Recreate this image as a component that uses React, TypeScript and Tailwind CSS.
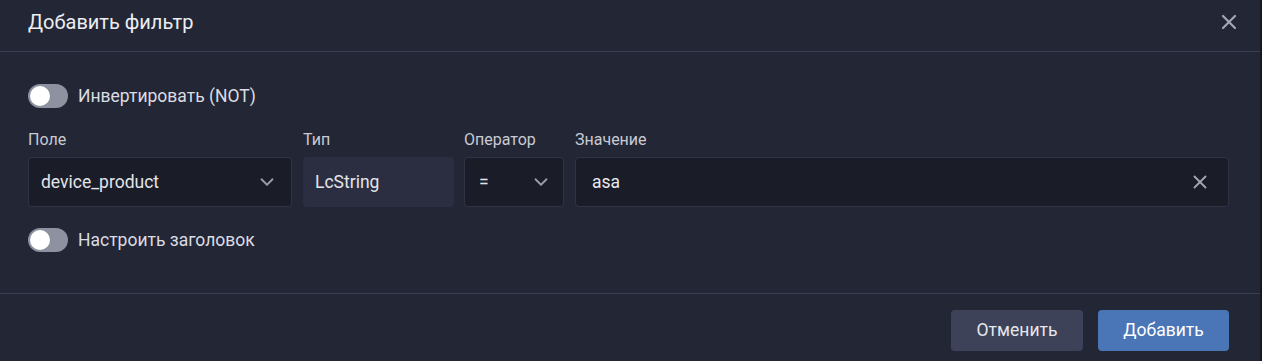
import { ChevronDown, X } from "lucide-react";

function Toggle({ label }: { label: string }) {
  return (
    <label className="flex items-center gap-[10px] h-6">
      <span className="relative w-10 h-6 rounded-full bg-[#8e919f] shrink-0">
        <span className="absolute left-[2px] top-[2px] size-5 rounded-full bg-white" />
      </span>
      <span className="text-[17.5px] text-[#dcdde3]">{label}</span>
    </label>
  );
}

function FieldLabel({ children }: { children: string }) {
  return <div className="text-[16px] leading-4 text-[#c9cbd3] mb-[9px]">{children}</div>;
}

export default function App() {
  return (
    <div className="w-[1262px] h-[361px] bg-[#161821] font-['Roboto',sans-serif] flex">
      <div className="w-[1260px] h-full bg-[#232635] flex flex-col">
        {/* header */}
        <div className="h-[52px] px-7 flex items-center justify-between border-b border-[#3a3f56]">
          <h2 className="text-[20px] text-[#eceef3] -mt-[8px]">Добавить фильтр</h2>
          <X size={24} strokeWidth={2.2} className="text-[#a3a6b4] mr-[-9px] -mt-[8px]" />
        </div>

        {/* body */}
        <div className="flex-1 px-7 pt-8 flex flex-col border-b border-[#3a3f56]">
          <Toggle label="Инвертировать (NOT)" />

          <div className="flex gap-[11px] mt-6">
            <div className="w-[264px]">
              <FieldLabel>Поле</FieldLabel>
              <div className="h-[50px] rounded bg-[#1a1c27] border border-[#2f3345] flex items-center justify-between pl-[12px] pr-[13px]">
                <span className="text-[17.5px] text-[#e3e4ea]">device_product</span>
                <ChevronDown size={22} strokeWidth={2} className="text-[#9a9dab]" />
              </div>
            </div>
            <div className="w-[151px]">
              <FieldLabel>Тип</FieldLabel>
              <div className="h-[50px] rounded bg-[#2b2e40] flex items-center px-3">
                <span className="text-[17.5px] text-[#e3e4ea]">LcString</span>
              </div>
            </div>
            <div className="w-[100px] -ml-[1px]">
              <FieldLabel>Оператор</FieldLabel>
              <div className="h-[50px] rounded bg-[#1a1c27] border border-[#2f3345] flex items-center justify-between pl-[14px] pr-[11px]">
                <span className="text-[17.5px] text-[#e3e4ea]">=</span>
                <ChevronDown size={22} strokeWidth={2} className="text-[#9a9dab]" />
              </div>
            </div>
            <div className="flex-1 mr-[3px]">
              <FieldLabel>Значение</FieldLabel>
              <div className="h-[50px] rounded bg-[#1a1c27] border border-[#2f3345] flex items-center justify-between pl-4 pr-[17px]">
                <span className="text-[17.5px] text-[#e8e9ee]">asa</span>
                <X size={22} strokeWidth={2} className="text-[#a3a6b4]" />
              </div>
            </div>
          </div>

          <div className="mt-[21px]">
            <Toggle label="Настроить заголовок" />
          </div>
        </div>

        {/* footer */}
        <div className="h-[67px] px-7 pt-4 flex justify-end gap-[15px] mr-[3px]">
          <button className="w-[132px] h-[41px] rounded bg-[#3e4259] text-[17.5px] text-[#e6e7ec]">Отменить</button>
          <button className="w-[131px] h-[41px] rounded bg-[#4a76b8] text-[17.5px] text-white">Добавить</button>
        </div>
      </div>
    </div>
  );
}
